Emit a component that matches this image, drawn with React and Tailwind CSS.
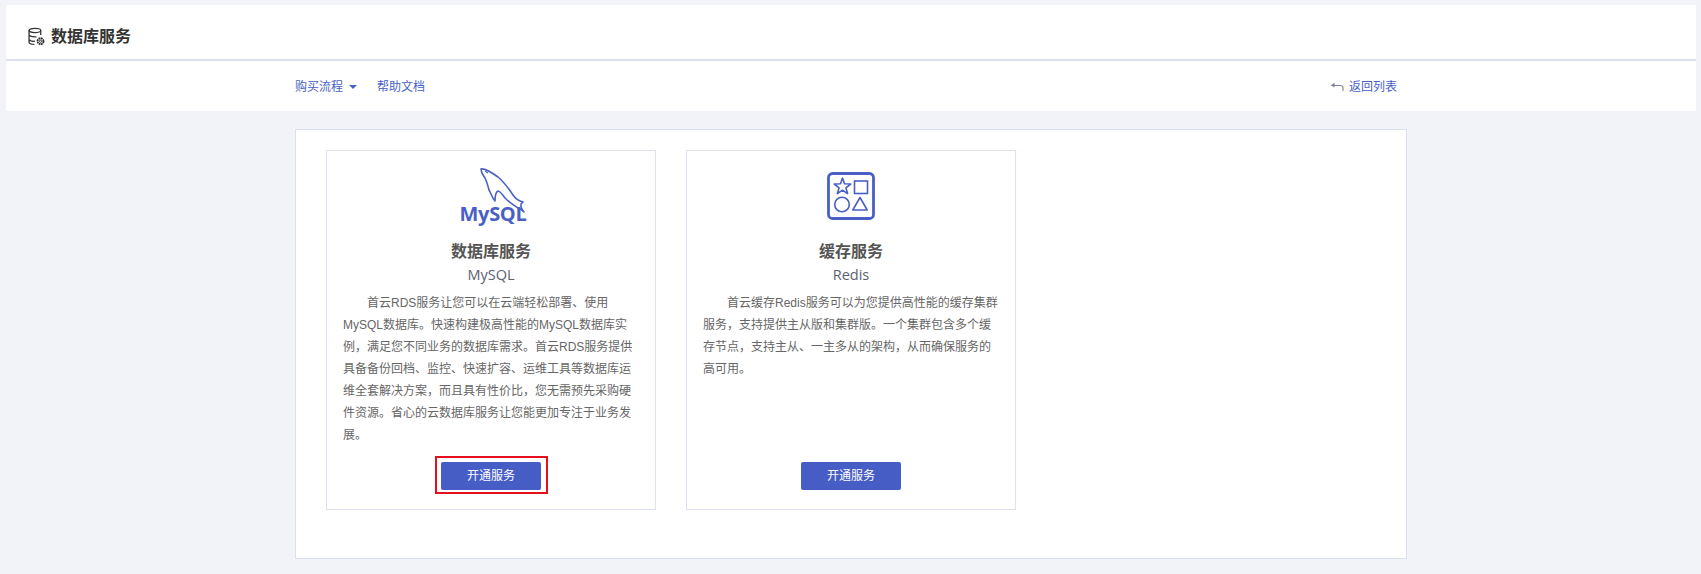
const Dolphin = () => (
  <svg width="50" height="50" viewBox="0 0 50 50" fill="none" className="block">
    <path d="M4 3 C8 2 14 6 21 11 C27 16 32 23 36 29 C38 32 42 35 46 36 L44 38 L44 41 C45 43 46 45 47 46 C45 44 44 43 41 42 C38 40 33 37 28 32 C25 28 23 25 21 25 C19 26 18 30 18 35 C15 32 14 27 12 24 C11 20 10 16 8 12 C6 9 4 7 4 3 Z" stroke="#4a61c4" strokeWidth="1.600" strokeLinejoin="round" />
    <path d="M8 5 L11 7" stroke="#4a61c4" strokeWidth="1.200" />
  </svg>
);

const Shapes = () => (
  <svg width="48" height="48" viewBox="0 0 48 48" fill="none" stroke="#4a5fc6">
    <rect x="1.500" y="1.500" width="45" height="45" rx="4" strokeWidth="2.800" />
    <path d="M15.500 6 L17.500 11.800 L23.800 12 L18.900 15.800 L20.600 21.600 L15.500 18.200 L10.400 21.600 L12.100 15.800 L7.200 12 L13.500 11.800 Z" strokeWidth="1.600" strokeLinejoin="round" />
    <rect x="27.500" y="9" width="13" height="12.500" strokeWidth="1.600" />
    <circle cx="15" cy="32.500" r="7.300" strokeWidth="1.600" />
    <path d="M33 25.500 L40.200 38 L25.800 38 Z" strokeWidth="1.600" strokeLinejoin="round" />
  </svg>
);

const DbIcon = () => (
  <svg width="17" height="20" viewBox="0 0 16 18" fill="none" stroke="#333" strokeWidth="1.200">
    <ellipse cx="6.500" cy="2.800" rx="5.500" ry="2" />
    <path d="M1 2.800 V14 C1 15.200 2.800 16 6 16 M12 2.800 V7 M1 7 C2 8.500 5 9 8 8.800 M1 11.500 C2 12.800 4 13.200 6.500 13.200" />
    <circle cx="11.800" cy="13" r="2.800" strokeWidth="1.800" strokeDasharray="1.700 0.500" />
    <circle cx="11.800" cy="13" r="1" strokeWidth="0.900" />
  </svg>
);

function Card({ icon, title, sub, desc, highlighted }) {
  return (
    <div className="w-[330px] h-[360px] border border-[#dde1ef] flex flex-col items-center">
      <div className="h-[68px] mt-[16px] flex justify-center">{icon}</div>
      <div className="mt-[5px] text-[16px] leading-[24px] font-bold text-[#555]">{title}</div>
      <div className="text-[14.500px] leading-[20px] text-[#5a6270] mt-[1px] font-['Open_Sans','Noto_Sans_CJK_SC',sans-serif]">{sub}</div>
      <p className="px-[16px] mt-[7px] w-full text-[12px] leading-[22px] text-[#666] indent-[24px] flex-1">{desc}</p>
      <div className={highlighted ? "mb-[15px] ml-[1px] border-2 border-[#e60f1e] pt-[4px] pb-[2px] pl-[4px] pr-[5px] flex" : "mb-[13px] p-[6px] flex"}>
        <button className="w-[100px] h-[28px] bg-[#475dc6] rounded-[2px] text-white text-[12px]">开通服务</button>
      </div>
    </div>
  );
}

export default function App() {
  return (
    <div className="w-[1701px] h-[574px] overflow-hidden bg-[#f1f3f8] pt-[5px] pl-[6px] pr-[5px] font-['Liberation_Sans','Noto_Sans_CJK_SC',sans-serif]">
      <div className="bg-white">
        <div className="h-[56px] border-b-2 border-[#dde1ef] flex items-center pt-[9px] pl-[22px] gap-[6px]">
          <DbIcon />
          <span className="text-[16px] font-bold text-[#333]">数据库服务</span>
        </div>
        <div className="h-[50px] flex items-center justify-between pt-[2px] pl-[289px] pr-[299px] text-[12px] text-[#4a5fc6]">
          <div className="flex items-center">
            <span>购买流程</span>
            <span className="ml-[6px] w-0 h-0 border-x-[4px] border-x-transparent border-t-[4px] border-t-[#4a5fc6]" />
            <span className="ml-[20px]">帮助文档</span>
          </div>
          <div className="flex items-center gap-[5px]">
            <svg width="14" height="10" viewBox="0 0 14 10" fill="none" stroke="#7d8299" strokeWidth="1.100"><path d="M13 9 V5.500 C13 4 11.500 3.500 10 3.500 H1.500" /><path d="M4.500 0.500 L1 3.500 L4.500 5.500" fill="#7d8299" stroke="none" /></svg>
            <span>返回列表</span>
          </div>
        </div>
      </div>
      <div className="mt-[18px] ml-[289px] w-[1112px] h-[430px] bg-white border border-[#dde1ef] pt-[20px] pl-[30px] flex gap-[30px]">
        <Card
          highlighted
          title="数据库服务"
          sub="MySQL"
          icon={
            <div className="relative w-[64px] h-[68px] ml-[1px]">
              <div className="absolute left-[17px] top-[-1px]"><Dolphin /></div>
              <span className="absolute left-0 top-[35px] text-[20px] leading-[24px] font-bold text-[#4a5fc6] font-['Open_Sans',sans-serif] tracking-[-0.3px]">MySQL</span>
            </div>
          }
          desc="首云RDS服务让您可以在云端轻松部署、使用MySQL数据库。快速构建极高性能的MySQL数据库实例，满足您不同业务的数据库需求。首云RDS服务提供具备备份回档、监控、快速扩容、运维工具等数据库运维全套解决方案，而且具有性价比，您无需预先采购硬件资源。省心的云数据库服务让您能更加专注于业务发展。"
        />
        <Card
          title="缓存服务"
          sub="Redis"
          icon={<div className="mt-[5px]"><Shapes /></div>}
          desc="首云缓存Redis服务可以为您提供高性能的缓存集群服务，支持提供主从版和集群版。一个集群包含多个缓存节点，支持主从、一主多从的架构，从而确保服务的高可用。"
        />
      </div>
    </div>
  );
}
